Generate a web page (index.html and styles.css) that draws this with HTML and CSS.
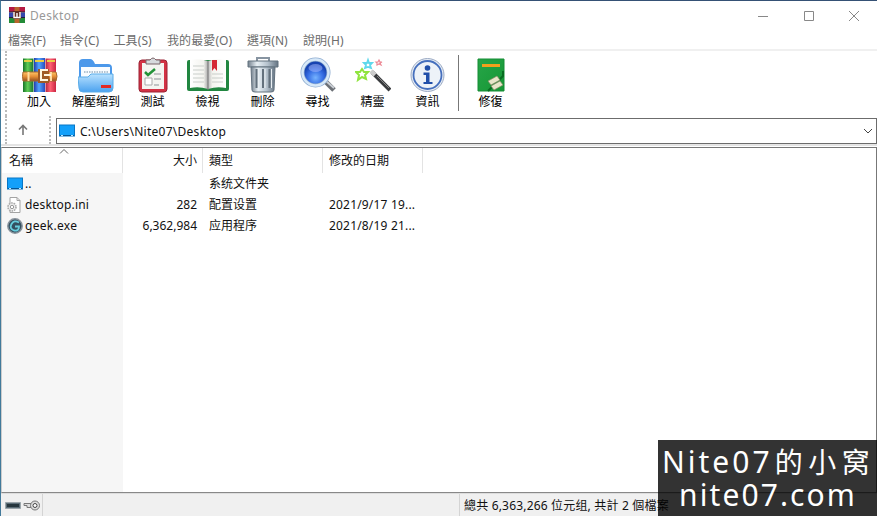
FILE: index.html
```html
<!DOCTYPE html>
<html lang="zh-Hant">
<head>
<meta charset="utf-8">
<title>Desktop</title>
<link rel="stylesheet" href="styles.css">
</head>
<body>
<svg class="defs" width="0" height="0" aria-hidden="true">
  <defs>
    <linearGradient id="bookR"><stop offset="0" stop-color="#b3243f"/><stop offset=".45" stop-color="#ff6273"/><stop offset="1" stop-color="#c92542"/></linearGradient>
    <linearGradient id="bookG"><stop offset="0" stop-color="#187328"/><stop offset=".45" stop-color="#60cd55"/><stop offset="1" stop-color="#197232"/></linearGradient>
    <linearGradient id="bookB"><stop offset="0" stop-color="#243dad"/><stop offset=".45" stop-color="#52a6ff"/><stop offset="1" stop-color="#274bbe"/></linearGradient>
    <linearGradient id="belt" x2="0" y2="1"><stop offset="0" stop-color="#ffc567"/><stop offset=".5" stop-color="#e58e36"/><stop offset="1" stop-color="#955020"/></linearGradient>
    <linearGradient id="folder" x2="0" y2="1"><stop offset="0" stop-color="#b9e2ff"/><stop offset="1" stop-color="#4ba2ef"/></linearGradient>
    <linearGradient id="metal"><stop offset="0" stop-color="#74818e"/><stop offset=".3" stop-color="#e7eff4"/><stop offset=".65" stop-color="#b5c2cd"/><stop offset="1" stop-color="#657482"/></linearGradient>
    <radialGradient id="lens" cy=".7"><stop offset="0" stop-color="#76b3ff"/><stop offset=".6" stop-color="#356de3"/><stop offset="1" stop-color="#1743b1"/></radialGradient>
    <linearGradient id="green" x2="1" y2="1"><stop offset="0" stop-color="#27a548"/><stop offset="1" stop-color="#159735"/></linearGradient>
    <linearGradient id="leafL"><stop offset="0" stop-color="#fff"/><stop offset=".75" stop-color="#f4f4ef"/><stop offset="1" stop-color="#aaa"/></linearGradient>
    <linearGradient id="leafR"><stop offset="0" stop-color="#bbb"/><stop offset=".25" stop-color="#f4f4ef"/><stop offset="1" stop-color="#fff"/></linearGradient>
    <symbol id="monitor" viewBox="0 0 16 14"><path d="M0 .5h16v12H0z" fill="#0876c5"/><path d="M1 1.5h14v9.5H1z" fill="#13a0fa"/><path d="M1 11h14v1H1z" fill="#075694"/><path d="M2 11.5h2m8 0h2" stroke="#bce7ff"/></symbol>
  </defs>
</svg>
<div class="window">
  <header class="titlebar">
    <svg class="app-icon" viewBox="0 0 16 16"><path fill="#b51942" d="M0 0h16v5H0z"/><path fill="#3546ad" d="M0 5.5h16v5H0z"/><path fill="#238b37" d="M0 11h16v5H0z"/><path d="M0 5h16M0 10.5h16" stroke="#241b38"/><path fill="#b9652d" d="M5.5 0h5v16h-5z"/><path fill="#602b22" d="M4 4h8v8H4z"/><path d="M5 5v5.5h6V5M8 6v4" fill="none" stroke="#fff" stroke-width="1.4"/></svg>
    <span class="title">Desktop</span>
    <div class="controls">
      <svg viewBox="0 0 12 12"><path d="M1 6.5h10"/></svg>
      <svg viewBox="0 0 12 12"><path d="M1.5 1.5h9v9h-9z"/></svg>
      <svg viewBox="0 0 12 12"><path d="M1 1l10 10M11 1L1 11"/></svg>
    </div>
  </header>
  <nav class="menu"><span>檔案(F)</span><span>指令(C)</span><span>工具(S)</span><span>我的最愛(O)</span><span>選項(N)</span><span>說明(H)</span></nav>
  <div class="toolbar">
    <i class="grip"></i>
    <div class="tool first"><svg viewBox="0 0 36 36"><path fill="url(#bookG)" d="M1 1.5h10.500V35H1z"/><path fill="url(#bookB)" d="M12 1h11v34H12z"/><path fill="url(#bookR)" d="M23.500 1.500H34V35H23.500z"/><path d="M2 4h8M13 4h9M25 4h8" stroke="#e9cf43" stroke-width="2"/><path d="M1 15q-1 4 0 9h33q2-5 0-9z" fill="url(#belt)" stroke="#a7662d"/><path d="M6.500 15v9M29 15v9" stroke="#ffdca0" stroke-width="2"/><path d="M16 12h11v14H16z" fill="#a05a24"/><path d="M26 13h-7v10h7M22 18h7" fill="none" stroke="#fff6e0" stroke-width="2"/></svg><span>加入</span></div>
    <div class="tool second"><svg viewBox="0 0 36 36"><path d="M1 33V6q0-4 4-4h7q3 0 5 5h13q4 0 4 4v22z" fill="#4b98ea"/><path d="M3 10h29v17H3z" fill="#f8fcff"/><path d="M6 15h25" stroke="#b2c4d2" stroke-width="2" stroke-dasharray="1.500 1"/><path d="M0 20h10l3-3h22v14q0 4-4 4H5q-4 0-4-4z" fill="url(#folder)" stroke="#5aace8"/><path d="M23 28h10v3H23z" fill="#e32a24"/></svg><span>解壓缩到</span></div>
    <div class="tool"><svg viewBox="0 0 36 36"><rect x="4" y="3" width="28" height="32" rx="3" fill="#d33244" stroke="#9a2334"/><path d="M7 6h22v26H7z" fill="#f4f4f0"/><path d="M11 7V3h4q3-4 6 0h4v4z" fill="#d7dadd" stroke="#796468"/><path d="M10 15l3 3 7-6" fill="none" stroke="#239338" stroke-width="2.500"/><path d="M19 17h7M19 22h7M19 28h5" stroke="#8d9396"/><path d="M10 21h7v7h-7z" fill="#fff" stroke="#aaa"/></svg><span>測試</span></div>
    <div class="tool book"><svg viewBox="0 0 42 36"><rect y="3" width="42" height="31" rx="2" fill="#218640"/><path d="M3 3q9-2 18 1v28q-9-3-18-1z" fill="url(#leafL)"/><path d="M21 4q9-3 18-1v28q-9-2-18 1z" fill="url(#leafR)"/><path d="M21 4v29" stroke="#777"/><path d="M6 9h11M6 13h11M6 17h11M6 21h11M6 25h11M25 17h11M25 21h11M25 25h11" stroke="#c9ceca"/><path d="M25 3h5v11l-2.500-3-2.500 3z" fill="#d52835"/></svg><span>檢視</span></div>
    <div class="tool"><svg viewBox="0 0 36 36"><path d="M12 4V1h12v3" fill="none" stroke="#8794a1" stroke-width="2"/><path d="M3 4h30v6H3z" fill="url(#metal)" stroke="#63727f"/><path d="M6 10h24l-1 23q0 2-3 2H10q-3 0-3-2z" fill="url(#metal)" stroke="#63727f"/><path d="M11.500 12v19M18 12v19M24.500 12v19" stroke="#63717d" stroke-width="2"/><path d="M13.500 12v19M20 12v19M26.500 12v19" stroke="#e9eff3"/></svg><span>刪除</span></div>
    <div class="tool"><svg viewBox="0 0 36 36"><path d="M26 25l8 8" stroke="#6c7076" stroke-width="5"/><path d="M26 24l8 7" stroke="#c9ced4" stroke-width="2"/><circle cx="15.500" cy="15.500" r="13" fill="url(#lens)" stroke="#8eacd0" stroke-width="4"/><circle cx="15.500" cy="15.500" r="13" fill="none" stroke="#d8e9f8" stroke-width="2.500"/><ellipse cx="15.500" cy="11" rx="7" ry="4" fill="#a9bbff" opacity=".5"/></svg><span>尋找</span></div>
    <div class="tool"><svg viewBox="0 0 36 36"><path d="M17 15l18 18" stroke="#393b3e" stroke-width="4"/><path d="M16 14l4 4" stroke="#ccc" stroke-width="4"/><path d="M22 19l12 12" stroke="#888"/><g fill="#fff" stroke-width="1.500"><path stroke="#90e43f" stroke-width="2" d="M7 12l2 3h4l-3 3 1 4-4-2-4 3 1-5-3-3h4z"/><path stroke="#5fd8ec" stroke-width="1.800" d="M13 3l1 3h3l-2 2 1 3-3-1-3 1 1-3-2-2h3z"/><path stroke="#ed8a96" stroke-width="1.200" d="M24 3l1 2h2l-2 1 1 2-2-1-2 1v-2l-1-1h2z"/></g></svg><span>精靈</span></div>
    <div class="tool"><svg viewBox="0 0 36 36"><circle cx="17.500" cy="18" r="16.500" fill="#e7edf5" stroke="#9cabc4"/><circle cx="17.500" cy="18" r="14" fill="#edf2f8" stroke="#456fbd" stroke-width="1.800"/><circle cx="17.500" cy="11" r="2.800" fill="#214fa9"/><path d="M13.500 15.500h6V25h3v2h-9v-2h2.500v-7h-2.500z" fill="#214fa9"/></svg><span>資訊</span></div>
    <i class="divider"></i>
    <div class="tool repair"><svg viewBox="0 0 36 36"><path d="M5 2h26v32H5z" fill="url(#green)" stroke="#158d35"/><path d="M9 8.500h18" stroke="#f4a01c" stroke-width="3"/><path d="M30 14v5l-4 4m-7 7l-4 4" fill="none" stroke="#076d20" stroke-width="2"/><path d="M15 24l9-5 3 4-9 5zM18 29l9-5 3 4-9 5z" fill="#e9e6c9" stroke="#878a66" stroke-width=".7"/></svg><span>修復</span></div>
  </div>
  <div class="address-row">
    <i class="grip"></i>
    <svg class="up" viewBox="0 0 12 12"><path d="M6 11V2M2 5.500l4-4 4 4"/></svg>
    <i class="grip second-grip"></i>
    <div class="address"><svg class="mini"><use href="#monitor"/></svg><span class="path">C:\Users\Nite07\Desktop</span><svg class="chevron" viewBox="0 0 10 6"><path d="M1 1l4 4 4-4"/></svg></div>
  </div>
  <main class="files">
    <div class="row head"><span class="name">名稱<svg class="sort" viewBox="0 0 10 5"><path d="M1 4.500l4-4 4 4"/></svg></span><span class="size">大小</span><span class="type">類型</span><span class="date">修改的日期</span></div>
    <div class="row parent"><span class="name"><svg class="mini"><use href="#monitor"/></svg><b>..</b></span><span class="size"></span><span class="type">系统文件夹</span><span class="date"></span></div>
    <div class="row"><span class="name"><svg class="mini" viewBox="0 0 16 16"><path d="M3 .5h7l3 3v12H3z" fill="#fff" stroke="#a3a3a3"/><path d="M10 .5v3h3" fill="none" stroke="#a3a3a3"/><circle cx="5" cy="10" r="4" fill="#eee" stroke="#a9a9a9" stroke-width="1.600" stroke-dasharray="1.600 .9"/><circle cx="5" cy="10" r="1.700" fill="#fff" stroke="#999"/></svg><b class="ini">desktop.ini</b></span><span class="size">282</span><span class="type">配置设置</span><span class="date">2021/9/17 19...</span></div>
    <div class="row"><span class="name"><svg class="mini" viewBox="0 0 16 16"><circle cx="8" cy="8" r="7.200" fill="#344f60" stroke="#88939c" stroke-width="1.500"/><path d="M12 4.500Q7 1.500 4.500 6T7 12.500q5 1 5-4H8" fill="none" stroke="#66ccdc" stroke-width="1.800"/></svg><b class="exe">geek.exe</b></span><span class="size">6,362,984</span><span class="type">应用程序</span><span class="date">2021/8/19 21...</span></div>
    <div class="rest"></div>
  </main>
  <footer class="status">
    <div class="status-icons"><svg viewBox="0 0 36 12"><path d="M.5 2.500h15v6H.5z" fill="#5a6b75" stroke="#9ba5aa"/><path d="M2 5.500h12" stroke="#26363d" stroke-width="3"/><path d="M28 3.500h-9v2h3v2h6" fill="#ddd" stroke="#777"/><circle cx="30" cy="5.500" r="4.500" fill="#ddd" stroke="#777"/><circle cx="30" cy="5.500" r="2" fill="#fff" stroke="#444"/></svg></div>
    <span class="total">總共 6,363,266 位元组, 共計 2 個檔案</span>
  </footer>
</div>
<aside class="watermark"><span class="wm-one">Nite07<span class="wm-han">的小窝</span></span><span class="wm-two">nite07.com</span></aside>
</body>
</html>
```
FILE: styles.css
```css
* { box-sizing: border-box; }
body { margin: 0; width: 877px; height: 516px; overflow: hidden; background: #fff; font: 12px/18px "Noto Sans", "Noto Sans CJK TC", sans-serif; color: #111; }
.defs { position: absolute; }
svg { display: block; flex: none; }
.window { height: 516px; display: flex; flex-direction: column; border-left: 1px solid #427a9b; border-top: 1px solid #355175; }
.titlebar { height: 30px; display: flex; align-items: center; padding-left: 8px; color: #999; flex: none; }
.app-icon { width: 16px; height: 16px; margin: -2px 5px 0 0; }
.title { letter-spacing: .35px; }
.controls { margin-left: auto; display: flex; gap: 33.500px; padding: 0 17px 1px 0; }
.controls svg { width: 12px; height: 12px; fill: none; stroke: #888; }
.menu { height: 20px; padding: 1px 0 0 7px; display: flex; border-bottom: 2px solid #f0f0f0; color: #6c6c6c; flex: none; letter-spacing: .1px; }
.menu span { white-space: nowrap; width: 53px; flex: none; line-height: 18px; }
.menu span:nth-child(1) { width: 52px; }
.menu span:nth-child(3), .menu span:nth-child(2) { width: 53.500px; }
.menu span:nth-child(4) { width: 80px; }
.menu span:nth-child(5) { width: 56px; }
.toolbar { height: 65px; display: flex; flex: none; }
.grip { border-left: 2px dotted #bbb; margin-left: 4px; height: 100%; }
.tool { width: 55px; display: flex; flex-direction: column; align-items: center; padding-top: 6px; white-space: nowrap; color: #000; }
.tool svg { width: 36px; height: 36px; }
.tool.first { margin-left: 5px; width: 56px; }
.tool.first span { margin-right: 2px; }
.tool.second { width: 56px; margin-right: 1px; }
.tool.book svg { width: 42px; }
.tool span { line-height: 18px; }
.divider { width: 1px; height: 56px; margin: 4px 4px 0 3px; background: #777; }
.address-row { height: 30px; display: flex; border-bottom: 2px solid #e4e4e4; flex: none; }
.up { width: 12px; height: 12px; margin: 8px 0 0 10px; fill: none; stroke: #777; stroke-width: 1.6; }
.grip.second-grip { margin-left: 20px; }
.address { margin: 2px 0 0 5px; flex: 1; height: 26px; border: 1px solid #6c6c6c; display: flex; align-items: center; padding: 0 3px 0 2px; }
.mini { width: 16px; height: 16px; }
.address .mini { height: 14px; margin-right: 5px; }
.path { letter-spacing: .27px; padding-top: 2px; }
.chevron { width: 10px; height: 6px; margin-left: auto; fill: none; stroke: #444; }
.files { margin-top: 1px; flex: 1; display: flex; flex-direction: column; border: 1px solid #777; border-left-color: #ccc; border-bottom-color: #888; }
.row { display: flex; height: 21px; line-height: 21px; flex: none; }
.row > span { white-space: nowrap; }
.name { width: 121px; background: #f6f6f6; padding-left: 5px; display: flex; align-items: center; position: relative; }
.name b { font-weight: 400; margin-left: 2px; }
.name .ini { letter-spacing: .18px; }
.name .exe { letter-spacing: .28px; }
.size { width: 80px; padding-right: 6px; text-align: right; }
.type { width: 120px; padding-left: 6px; }
.date { width: 100px; padding-left: 6px; letter-spacing: .18px; }
.head { height: 25px; line-height: 25px; }
.head > span { border-right: 1px solid #e3e3e3; }
.head .name { background: #fff; padding-left: 7px; }
.head .size { padding-right: 5px; }
.head .date { letter-spacing: 0; }
.sort { position: absolute; left: 57px; top: 1px; width: 10px; height: 5px; fill: none; stroke: #666; }
.rest { flex: 1; width: 121px; background: #f6f6f6; }
.status { height: 23px; background: #f0f0f0; border-top: 1px solid #ddd; display: flex; flex: none; }
.status-icons { width: 42px; border-right: 1px solid #d4d4d4; padding: 6px 0 0 4px; }
.status-icons svg { width: 36px; height: 12px; }
.total { margin-left: 416px; border-left: 1px solid #d4d4d4; padding-left: 4px; line-height: 24px; white-space: pre; letter-spacing: .18px; }
.watermark { position: absolute; right: 0; bottom: 0; width: 219px; height: 76px; background: rgba(0,0,0,.8); color: #fff; display: flex; flex-direction: column; font: 30px/33px "Noto Sans", "Noto Sans CJK SC", sans-serif; padding-top: 5px; white-space: nowrap; }
.wm-one { padding-left: 4px; height: 33px; letter-spacing: 3px; }
.wm-han { font-size: 28px; letter-spacing: 5.500px; margin-left: 2px; }
.wm-two { padding-left: 21px; letter-spacing: 2.100px; }
```
